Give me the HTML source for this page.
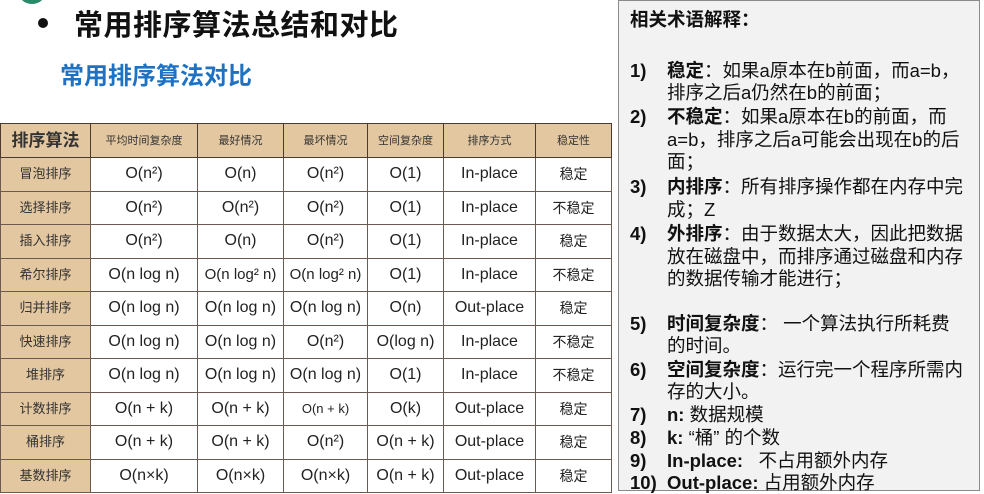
<!DOCTYPE html>
<html><head><meta charset="utf-8"><style>
*{margin:0;padding:0;box-sizing:border-box}
body{width:984px;height:491px;overflow:hidden;background:#fff;position:relative;font-family:"Liberation Sans","Noto Sans CJK SC",sans-serif}
.circ{position:absolute;left:18px;top:-22px;width:28px;height:26px;border-radius:50%;background:#2a8a6a}
.t1{position:absolute;left:38px;top:2px;font-size:29px;font-weight:bold;color:#111;white-space:nowrap;letter-spacing:0.5px}
.t1 b{display:inline-block;width:10px;height:10px;border-radius:50%;background:#111;margin-right:26px;vertical-align:middle;position:relative;top:-4px}
.t2{position:absolute;left:60px;top:56px;font-size:24px;font-weight:bold;color:#1f72c2;white-space:nowrap}
table{position:absolute;left:0;top:123px;border-collapse:collapse;table-layout:fixed;width:611px;font-family:"Liberation Sans","Noto Sans CJK SC",sans-serif}
td{border:1px solid #6b5a50;text-align:center;vertical-align:middle;height:33.5px;font-size:16px;line-height:18px;color:#222;white-space:nowrap;overflow:hidden;padding:0}
tr:first-child td{background:#e3c7a0;height:34px;font-size:11px;color:#333;border-color:#4a3a30}
tr:first-child td:first-child{font-size:17px;font-weight:bold}
td:first-child{background:#e3c7a0;font-size:13px;color:#333}
td.s{font-size:14px}
.panel{position:absolute;left:618px;top:0;width:362px;height:491px;background:#f2f2f2;border:1px solid #8a8a8a}
.panel div{position:absolute;font-size:18.5px;color:#111;white-space:nowrap;line-height:22px}
.n{left:11px;font-weight:bold}
.x{left:48px}
</style></head><body>
<div class="circ"></div>
<div class="t1"><b></b>常用排序算法总结和对比</div>
<div class="t2">常用排序算法对比</div>
<table>
<colgroup><col style="width:90px"><col style="width:107px"><col style="width:86px"><col style="width:84px"><col style="width:76px"><col style="width:92px"><col style="width:76px"></colgroup>
<tr><td>排序算法</td><td>平均时间复杂度</td><td>最好情况</td><td>最坏情况</td><td>空间复杂度</td><td>排序方式</td><td>稳定性</td></tr>
<tr><td>冒泡排序</td><td>O(n²)</td><td>O(n)</td><td>O(n²)</td><td>O(1)</td><td>In-place</td><td class="s">稳定</td></tr>
<tr><td>选择排序</td><td>O(n²)</td><td>O(n²)</td><td>O(n²)</td><td>O(1)</td><td>In-place</td><td class="s">不稳定</td></tr>
<tr><td>插入排序</td><td>O(n²)</td><td>O(n)</td><td>O(n²)</td><td>O(1)</td><td>In-place</td><td class="s">稳定</td></tr>
<tr><td>希尔排序</td><td>O(n log n)</td><td style="font-size:15px">O(n log² n)</td><td style="font-size:15px">O(n log² n)</td><td>O(1)</td><td>In-place</td><td class="s">不稳定</td></tr>
<tr><td>归并排序</td><td>O(n log n)</td><td>O(n log n)</td><td>O(n log n)</td><td>O(n)</td><td>Out-place</td><td class="s">稳定</td></tr>
<tr><td>快速排序</td><td>O(n log n)</td><td>O(n log n)</td><td>O(n²)</td><td>O(log n)</td><td>In-place</td><td class="s">不稳定</td></tr>
<tr><td>堆排序</td><td>O(n log n)</td><td>O(n log n)</td><td>O(n log n)</td><td>O(1)</td><td>In-place</td><td class="s">不稳定</td></tr>
<tr><td>计数排序</td><td>O(n + k)</td><td>O(n + k)</td><td style="font-size:13px">O(n + k)</td><td>O(k)</td><td>Out-place</td><td class="s">稳定</td></tr>
<tr><td>桶排序</td><td>O(n + k)</td><td>O(n + k)</td><td>O(n²)</td><td>O(n + k)</td><td>Out-place</td><td class="s">稳定</td></tr>
<tr><td>基数排序</td><td>O(n×k)</td><td>O(n×k)</td><td>O(n×k)</td><td>O(n + k)</td><td>Out-place</td><td class="s">稳定</td></tr>
</table>
<div class="panel">
<div style="left:11px;top:8px;font-weight:bold">相关术语解释：</div>
<div class="n" style="top:59px">1)</div><div class="x" style="top:59px"><b>稳定</b>：如果a原本在b前面，而a=b，</div>
<div class="x" style="top:81px">排序之后a仍然在b的前面；</div>
<div class="n" style="top:105px">2)</div><div class="x" style="top:105px"><b>不稳定</b>：如果a原本在b的前面，而</div>
<div class="x" style="top:128px">a=b，排序之后a可能会出现在b的后</div>
<div class="x" style="top:150px">面；</div>
<div class="n" style="top:175px">3)</div><div class="x" style="top:175px"><b>内排序</b>：所有排序操作都在内存中完</div>
<div class="x" style="top:198px">成；Z</div>
<div class="n" style="top:222px">4)</div><div class="x" style="top:222px"><b>外排序</b>：由于数据太大，因此把数据</div>
<div class="x" style="top:245px">放在磁盘中，而排序通过磁盘和内存</div>
<div class="x" style="top:267px">的数据传输才能进行；</div>
<div class="n" style="top:312px">5)</div><div class="x" style="top:312px"><b>时间复杂度</b>： 一个算法执行所耗费</div>
<div class="x" style="top:334px">的时间。</div>
<div class="n" style="top:358px">6)</div><div class="x" style="top:358px"><b>空间复杂度</b>：运行完一个程序所需内</div>
<div class="x" style="top:380px">存的大小。</div>
<div class="n" style="top:403px">7)</div><div class="x" style="top:403px"><b>n:</b> 数据规模</div>
<div class="n" style="top:426px">8)</div><div class="x" style="top:426px"><b>k:</b> “桶” 的个数</div>
<div class="n" style="top:449px">9)</div><div class="x" style="top:449px"><b>In-place:</b> &nbsp; 不占用额外内存</div>
<div class="n" style="top:471px">10)</div><div class="x" style="top:471px"><b>Out-place:</b> 占用额外内存</div>
</div>
</body></html>
